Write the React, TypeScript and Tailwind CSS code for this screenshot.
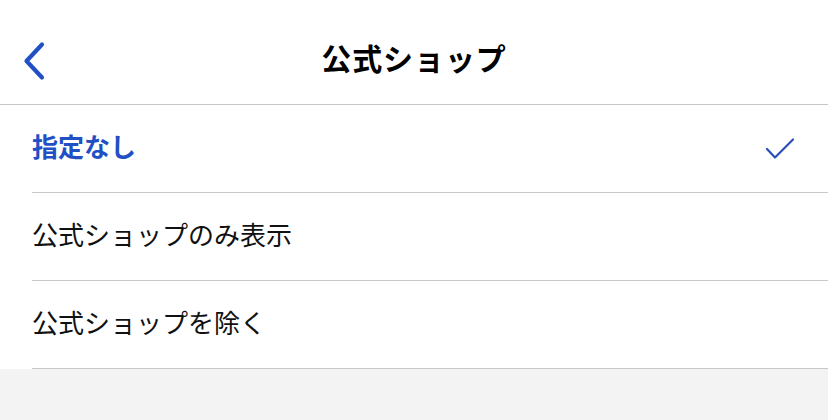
import React from 'react';

const options = [
  { label: '指定なし', selected: true },
  { label: '公式ショップのみ表示', selected: false },
  { label: '公式ショップを除く', selected: false },
];

function BackIcon() {
  return (
    <svg width="26" height="40" viewBox="0 0 26 40" aria-hidden>
      <path d="M20 3.5 L4.5 20 L20 36.5" fill="none" stroke="#2150c4" strokeWidth="4.2" strokeLinecap="round" strokeLinejoin="round" />
    </svg>
  );
}

function CheckIcon() {
  return (
    <svg width="30" height="22" viewBox="0 0 30 22" aria-hidden>
      <path d="M2 11 L10 19.5 L28 1.5" fill="none" stroke="#2a4fb8" strokeWidth="2.2" strokeLinecap="round" strokeLinejoin="round" />
    </svg>
  );
}

export default function App() {
  return (
    <div
      className="w-[828px] h-[420px] flex flex-col bg-[#f3f3f3] overflow-hidden"
      style={{ fontFamily: '"Noto Sans CJK JP", "Noto Sans", sans-serif' }}
    >
      <header className="relative h-[105px] flex items-center justify-center bg-white border-b border-[#c6c6c6] flex-shrink-0">
        <button type="button" className="absolute left-[22px] top-[41px] flex items-center">
          <BackIcon />
        </button>
        <h1 className="text-[30px] font-bold text-black tracking-[0.03em] mt-[10px]">公式ショップ</h1>
      </header>

      <ul className="bg-white flex-shrink-0">
        {options.map((o) => (
          <li key={o.label} className="pl-8">
            <div className="h-[88px] flex items-center justify-between pr-[33px] border-b border-[#c8c8c8]">
              <span
                className={
                  o.selected
                    ? 'text-[26px] font-bold text-[#2150c4] -mt-[6px]'
                    : 'text-[26px] text-[#111] -mt-[6px]'
                }
              >
                {o.label}
              </span>
              {o.selected && <CheckIcon />}
            </div>
          </li>
        ))}
      </ul>
    </div>
  );
}
